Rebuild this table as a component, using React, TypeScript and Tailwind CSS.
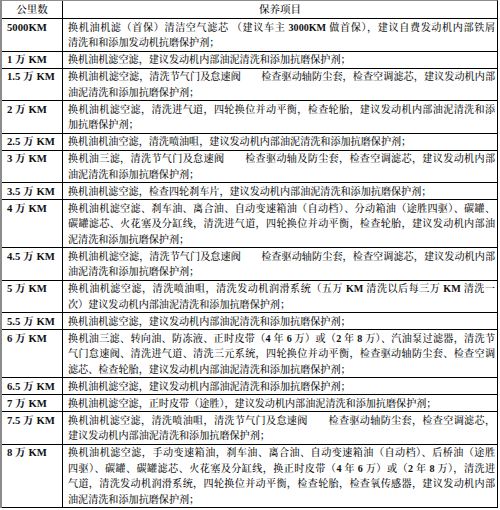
const rows: { km: string; lines: string[] }[] = [
  {
    km: "5000KM",
    lines: [
      "换机油机滤（首保）清洁空气滤芯 （建议车主 3000KM 做首保），建议自费发动机内部铁屑",
      "清洗和和添加发动机抗磨保护剂；",
    ],
  },
  { km: "1 万 KM", lines: ["换机油机滤空滤，建议发动机内部油泥清洗和添加抗磨保护剂；"] },
  {
    km: "1.5 万 KM",
    lines: [
      "换机油机滤空滤，清洗节气门及怠速阀\u3000\u3000检查驱动轴防尘套，检查空调滤芯，建议发动机内部",
      "油泥清洗和添加抗磨保护剂；",
    ],
  },
  {
    km: "2 万 KM",
    lines: [
      "换机油机滤空滤，清洗进气道，四轮换位并动平衡，检查轮胎，建议发动机内部油泥清洗和添",
      "加抗磨保护剂；",
    ],
  },
  { km: "2.5 万 KM", lines: ["换机油机油空滤，清洗喷油咀，建议发动机内部油泥清洗和添加抗磨保护剂；"] },
  {
    km: "3 万 KM",
    lines: [
      "换机油三滤，清洗节气门及怠速阀\u3000\u3000检查驱动轴及防尘套，检查空调滤芯，建议发动机内部",
      "油泥清洗和添加抗磨保护剂；",
    ],
  },
  { km: "3.5 万 KM", lines: ["换机油机滤空滤，检查四轮刹车片，建议发动机内部油泥清洗和添加抗磨保护剂；"] },
  {
    km: "4 万 KM",
    lines: [
      "换机油机滤空滤、刹车油、离合油、自动变速箱油（自动档）、分动箱油（途胜四驱）、碳罐、",
      "碳罐滤芯、火花塞及分缸线，清洗进气道，四轮换位并动平衡，检查轮胎，建议发动机内部油",
      "泥清洗和添加抗磨保护剂；",
    ],
  },
  {
    km: "4.5 万 KM",
    lines: [
      "换机油机滤空滤，清洗节气门及怠速阀\u3000\u3000检查驱动轴防尘套，检查空调滤芯，建议发动机内部",
      "油泥清洗和添加抗磨保护剂；",
    ],
  },
  {
    km: "5 万 KM",
    lines: [
      "换机油机滤空滤，清洗喷油咀，清洗发动机润滑系统（五万 KM 清洗以后每三万 KM 清洗一",
      "次）建议发动机内部油泥清洗和添加抗磨保护剂；",
    ],
  },
  { km: "5.5 万 KM", lines: ["换机油机滤空滤，建议发动机内部油泥清洗和添加抗磨保护剂；"] },
  {
    km: "6 万 KM",
    lines: [
      "换机油三滤、转向油、防冻液、正时皮带（4 年 6 万）或（2 年 8 万）、汽油泵过滤器，清洗节",
      "气门怠速阀、清洗进气道、清洗三元系统，四轮换位并动平衡，检查驱动轴防尘套、检查空调",
      "滤芯、检查轮胎，建议发动机内部油泥清洗和添加抗磨保护剂；",
    ],
  },
  { km: "6.5 万 KM", lines: ["换机油机滤空滤，建议发动机内部油泥清洗和添加抗磨保护剂；"] },
  { km: "7 万 KM", lines: ["换机油机滤空滤，正时皮带（途胜），建议发动机内部油泥清洗和添加抗磨保护剂；"] },
  {
    km: "7.5 万 KM",
    lines: [
      "换机油机滤空滤，清洗喷油咀，清洗节气门及怠速阀\u3000\u3000检查驱动轴防尘套，检查空调滤芯，",
      "建议发动机内部油泥清洗和添加抗磨保护剂；",
    ],
  },
  {
    km: "8 万 KM",
    lines: [
      "换机油机滤空滤，手动变速箱油，刹车油、离合油、自动变速箱油（自动档）、后桥油（途胜",
      "四驱）、碳罐、碳罐滤芯、火花塞及分缸线，换正时皮带（4 年 6 万）或（2 年 8 万），清洗进",
      "气道，清洗发动机润滑系统，四轮换位并动平衡，检查轮胎，检查氧传感器，建议发动机内部",
      "油泥清洗和添加抗磨保护剂；",
    ],
  },
];

// latin bits (digits, KM) are bold in the original doc
const Rich = ({ text }: { text: string }) => (
  <>
    {text.split(/([0-9A-Z]+)/).map((part, i) =>
      i % 2 === 1 ? <b key={i}>{part}</b> : <span key={i}>{part}</span>
    )}
  </>
);

export default function App() {
  return (
    <div className="w-[500px] h-[510px] overflow-hidden bg-white text-[#111] font-['Liberation_Serif','Noto_Serif_CJK_SC','Noto_Sans_CJK_SC',serif]">
      <div className="w-[498px] border-l-2 border-t border-r border-l-[#8c8c8c] border-t-[#8c8c8c] border-r-black">
        <div className="flex h-[18px] border-b border-black text-[10.5px] font-medium">
          <div className="w-[61px] shrink-0 border-r border-black flex items-center justify-center">
            公里数
          </div>
          <div className="flex-1 flex items-center justify-center">保养项目</div>
        </div>

        {rows.map((row) => (
          <div key={row.km} className="flex border-b border-black leading-[15.5px]">
            <div className="w-[61px] shrink-0 border-r border-black pl-[5px] pt-[0.5px] text-[10.7px] font-bold whitespace-nowrap">
              {row.km}
            </div>
            <div className="flex-1 min-w-0 pl-[5px] pr-[2px] pt-[0.5px] text-[10.1px] font-medium">
              {row.lines.map((line, i) => (
                <div
                  key={i}
                  className={
                    i < row.lines.length - 1
                      ? "whitespace-nowrap text-justify [text-align-last:justify]"
                      : "whitespace-nowrap"
                  }
                >
                  <Rich text={line} />
                </div>
              ))}
            </div>
          </div>
        ))}
      </div>
    </div>
  );
}
